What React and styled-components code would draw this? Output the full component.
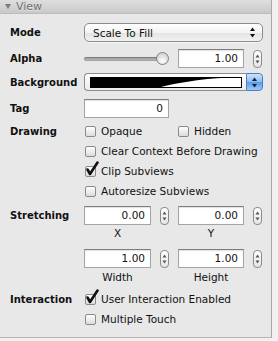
import React from 'react'
import styled, { createGlobalStyle } from 'styled-components'

const GlobalStyle = createGlobalStyle`
  html, body {
    margin: 0;
    padding: 0;
    background: #f1f1f1;
  }
  body {
    font-family: "DejaVu Sans", Verdana, sans-serif;
    font-size: 10.5px;
    color: #111;
  }
`

const Frame = styled.div`
  width: 278px;
  height: 341px;
  background: #f1f1f1;
  overflow: hidden;
`

const Panel = styled.div`
  box-sizing: border-box;
  width: 272px;
  height: 338px;
  background: #e8e8e8;
  border-right: 1px solid #a9a9a9;
  border-bottom: 1px solid #b4b4b4;
`

const Header = styled.div`
  box-sizing: border-box;
  height: 14px;
  display: flex;
  align-items: center;
  padding-left: 5px;
  background: linear-gradient(#dedede, #c9c9c9);
  border-bottom: 1px solid #bcbcbc;
  color: #707070;
  font-size: 11px;
  text-shadow: 0 1px 0 rgba(255, 255, 255, 0.5);
`

const Triangle = styled.span`
  width: 0;
  height: 0;
  border-left: 3px solid transparent;
  border-right: 3px solid transparent;
  border-top: 5px solid #7a7a7a;
  margin-right: 5px;
`

const Row = styled.div`
  display: flex;
  align-items: center;
  height: ${p => p.$h || 20}px;
  margin-top: ${p => p.$mt || 0}px;
`

const Label = styled.div`
  box-sizing: border-box;
  flex-shrink: 0;
  width: 84px;
  padding-left: 10px;
  font-weight: bold;
  font-size: 10px;
  color: #111;
`

const PopUp = styled.div`
  box-sizing: border-box;
  position: relative;
  width: 179px;
  height: 19px;
  display: flex;
  align-items: center;
  padding-left: 8px;
  border: 1px solid #8c8c8c;
  border-radius: 5px;
  background: linear-gradient(#ffffff, #f3f3f3 50%, #e4e4e4 51%, #f0f0f0);
  box-shadow: 0 1px 0 rgba(255, 255, 255, 0.6);
`

const PopArrows = styled.svg`
  position: absolute;
  right: 6px;
  top: 3px;
`

const SliderBox = styled.div`
  position: relative;
  width: 86px;
  height: 19px;
`

const Track = styled.div`
  position: absolute;
  left: 0;
  right: 8px;
  top: 8px;
  height: 4px;
  border-radius: 2px;
  background: linear-gradient(#8e8e8e, #c8c8c8);
  box-shadow: inset 0 0 0 1px rgba(0, 0, 0, 0.15);
`

const Thumb = styled.div`
  box-sizing: border-box;
  position: absolute;
  left: 72px;
  top: 3px;
  width: 13px;
  height: 13px;
  border-radius: 50%;
  border: 1px solid #7f7f7f;
  background: radial-gradient(circle at 50% 70%, #ffffff, #d6d6d6 70%);
`

const FieldGroup = styled.div`
  display: flex;
  align-items: center;
  gap: 9px;
  margin-left: ${p => p.$ml || 0}px;
`

const TextField = styled.div`
  box-sizing: border-box;
  width: ${p => p.$w}px;
  height: 19px;
  margin-left: ${p => p.$ml || 0}px;
  padding-right: 5px;
  line-height: 17px;
  text-align: right;
  background: #fff;
  border: 1px solid #a4a4a4;
  border-top-color: #7e7e7e;
  box-shadow: inset 0 1px 1px rgba(0, 0, 0, 0.12);
  font-size: 10.5px;
  color: #111;
`

const StepperBox = styled.div`
  box-sizing: border-box;
  width: 9px;
  height: 18px;
  margin-left: ${p => p.$ml || 0}px;
  border: 1px solid #8a8a8a;
  border-radius: 4px;
  background: linear-gradient(#ffffff, #e6e6e6);
  display: flex;
  align-items: center;
  justify-content: center;
`

const Stepper = ({ ml }) => (
  <StepperBox $ml={ml}>
    <svg width="5" height="12" viewBox="0 0 5 12">
      <path d="M2.5 1.5 L4.5 4.5 H0.5 Z" fill="#555" />
      <path d="M2.5 10.5 L4.5 7.5 H0.5 Z" fill="#555" />
    </svg>
  </StepperBox>
)

const StepField = ({ value, w, ml }) => (
  <FieldGroup $ml={ml}>
    <TextField $w={w}>{value}</TextField>
    <Stepper />
  </FieldGroup>
)

const ColorWell = styled.div`
  display: flex;
  width: 179px;
  height: 18px;
`

const WellBody = styled.div`
  box-sizing: border-box;
  flex: 1;
  display: flex;
  align-items: center;
  padding-left: 5px;
  border: 1px solid #8c8c8c;
  border-right: none;
  border-radius: 4px 0 0 4px;
  background: linear-gradient(#ffffff, #ececec);
`

const Swatch = styled.svg`
  display: block;
  border: 1px solid #000;
  background: #fff;
`

const WellButton = styled.div`
  box-sizing: border-box;
  width: 17px;
  border: 1px solid #4d7fc0;
  border-radius: 0 4px 4px 0;
  background: linear-gradient(#cfe3fb, #8bbcf2 50%, #5a9aea 51%, #9ccaf8);
  display: flex;
  align-items: center;
  justify-content: center;
`

const CheckItem = styled.label`
  display: flex;
  align-items: center;
  width: ${p => (p.$w ? `${p.$w}px` : 'auto')};
  margin-left: ${p => p.$ml || 0}px;
  font-size: 10.5px;
  color: #111;
`

const Box = styled.span`
  box-sizing: border-box;
  position: relative;
  flex-shrink: 0;
  width: 11px;
  height: 11px;
  margin-right: 5px;
  border: 1px solid #8a8a8a;
  border-radius: 2px;
  background: linear-gradient(#ffffff, #dcdcdc);
`

const Tick = styled.svg`
  position: absolute;
  left: 0;
  top: -6px;
`

const Check = ({ text, checked, w, ml }) => (
  <CheckItem $w={w} $ml={ml}>
    <Box>
      {checked && (
        <Tick width="13" height="15" viewBox="0 0 13 15">
          <path d="M1.5 8.5 L4 13 L11.5 1.5" fill="none" stroke="#111" strokeWidth="2.6" strokeLinecap="round" strokeLinejoin="round" />
        </Tick>
      )}
    </Box>
    {text}
  </CheckItem>
)

const Captions = styled.div`
  display: grid;
  grid-template-columns: 67px 27px 66px;
  margin-left: 84px;
  height: ${p => p.$h}px;
  align-items: center;
  font-size: 10.5px;
`

const Caption = styled.div`
  grid-column: ${p => p.$col};
  text-align: center;
`

export default function App() {
  return (
    <Frame>
      <GlobalStyle />
      <Panel>
        <Header>
          <Triangle />
          View
        </Header>

        <Row $mt={9} $h={19}>
          <Label>Mode</Label>
          <PopUp>
            Scale To Fill
            <PopArrows width="7" height="11" viewBox="0 0 7 11">
              <path d="M3.5 0.5 L6 4 H1 Z" fill="#111" />
              <path d="M3.5 10.5 L6 7 H1 Z" fill="#111" />
            </PopArrows>
          </PopUp>
        </Row>

        <Row $mt={7} $h={19}>
          <Label>Alpha</Label>
          <SliderBox>
            <Track />
            <Thumb />
          </SliderBox>
          <TextField $w={66} $ml={8}>1.00</TextField>
          <Stepper ml={9} />
        </Row>

        <Row $mt={5} $h={18}>
          <Label>Background</Label>
          <ColorWell>
            <WellBody>
              <Swatch width="150" height="9" viewBox="0 0 150 9" preserveAspectRatio="none">
                <path d="M0 0 H130 C110 1 85 5 70 9 H0 Z" fill="#000" />
              </Swatch>
            </WellBody>
            <WellButton>
              <svg width="7" height="11" viewBox="0 0 7 11">
                <path d="M3.5 0.5 L6 4 H1 Z" fill="#123" />
                <path d="M3.5 10.5 L6 7 H1 Z" fill="#123" />
              </svg>
            </WellButton>
          </ColorWell>
        </Row>

        <Row $mt={8} $h={19}>
          <Label>Tag</Label>
          <TextField $w={85}>0</TextField>
        </Row>

        <Row $mt={3}>
          <Label>Drawing</Label>
          <Check text="Opaque" w={93} ml={1} />
          <Check text="Hidden" />
        </Row>
        <Row>
          <Label />
          <Check text="Clear Context Before Drawing" ml={1} />
        </Row>
        <Row>
          <Label />
          <Check text="Clip Subviews" checked ml={1} />
        </Row>
        <Row>
          <Label />
          <Check text="Autoresize Subviews" ml={1} />
        </Row>

        <Row $mt={5} $h={19}>
          <Label>Stretching</Label>
          <StepField value="0.00" w={67} />
          <StepField value="0.00" w={66} ml={9} />
        </Row>
        <Captions $h={16}>
          <Caption $col={1}>X</Caption>
          <Caption $col={3}>Y</Caption>
        </Captions>

        <Row $mt={8} $h={19}>
          <Label />
          <StepField value="1.00" w={67} />
          <StepField value="1.00" w={66} ml={9} />
        </Row>
        <Captions $h={18}>
          <Caption $col={1}>Width</Caption>
          <Caption $col={3}>Height</Caption>
        </Captions>

        <Row $mt={3}>
          <Label>Interaction</Label>
          <Check text="User Interaction Enabled" checked ml={1} />
        </Row>
        <Row>
          <Label />
          <Check text="Multiple Touch" ml={1} />
        </Row>
      </Panel>
    </Frame>
  )
}
